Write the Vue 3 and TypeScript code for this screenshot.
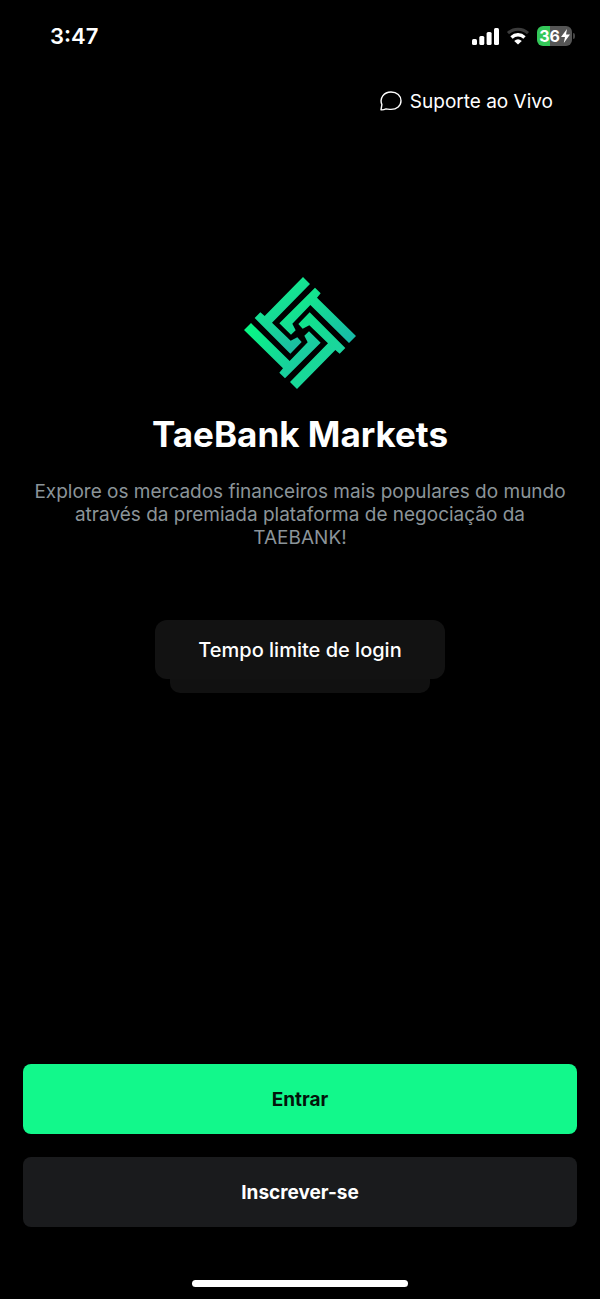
<script setup lang="ts">
interface LogoArm {
  id: string
  points: string
  from: [number, number]
  to: [number, number]
  start: string
  end: string
}

const arms: LogoArm[] = [
  {
    id: 'arm-top',
    points: '220,35 241,56 127,172 183,226 203,216 216,230 182,265 75,158 92,141 105,152',
    from: [130, 100], to: [216, 240], start: '#14e590', end: '#1bbda3',
  },
  {
    id: 'arm-right',
    points: '379,212 358,233 242,119 188,175 198,195 184,208 149,174 256,67 273,84 262,97',
    from: [250, 80], to: [372, 220], start: '#14e58e', end: '#17b9a8',
  },
  {
    id: 'arm-bottom',
    points: '202,371 181,350 295,234 239,180 219,190 206,176 240,141 347,248 330,265 317,254',
    from: [210, 150], to: [340, 250], start: '#0fe388', end: '#1cd49f',
  },
  {
    id: 'arm-left',
    points: '43,194 64,173 180,287 234,231 224,211 238,198 273,232 166,339 149,322 160,309',
    from: [50, 180], to: [210, 290], start: '#07f983', end: '#1acb9f',
  },
]

const title = 'TaeBank Markets'
const description =
  'Explore os mercados financeiros mais populares do mundo através da premiada plataforma de negociação da TAEBANK!'
</script>

<template>
  <div class="screen">
    <header class="status">
      <span class="time">3:47</span>
      <div class="indicators">
        <svg class="signal" viewBox="0 0 27 17" aria-label="Sinal">
          <rect x="0" y="11" width="5" height="6" rx="1.5" />
          <rect x="7.3" y="8" width="5" height="9" rx="1.5" />
          <rect x="14.6" y="4" width="5" height="13" rx="1.5" />
          <rect x="22" y="0" width="5" height="17" rx="1.5" />
        </svg>
        <svg class="wifi" viewBox="0 0 24 18" fill="none" aria-label="Wi-Fi">
          <path d="M2 6.2C7.500 .9 16.500 .9 22 6.200" stroke="#3b3b3b" stroke-width="3" />
          <path d="M5.500 10.400C9.300 6.800 14.700 6.800 18.500 10.400" stroke="#fff" stroke-width="3.400" />
          <path d="M12 17.600L8.200 13.900Q12 10.800 15.800 13.900Z" fill="#fff" />
        </svg>
        <div class="battery">
          <div class="cell">
            <span>36</span>
            <svg class="bolt" viewBox="0 0 9 14" aria-hidden="true">
              <path d="M6 0L0 8H4L2.800 14L9 5.600H5Z" />
            </svg>
          </div>
          <i class="cap"></i>
        </div>
      </div>
    </header>

    <div class="toolbar">
      <button class="support" type="button">
        <svg viewBox="0 0 22 20" aria-hidden="true">
          <path d="M1 18.800L1.900 13.500C-.9 7 4 1 11 1C17 1 21 4.800 21 9.800C21 14.800 16.800 18.400 11 18.400C9 18.400 7.400 18 6 17.900C4.400 18.600 2.600 19 1 18.800Z" />
        </svg>
        Suporte ao Vivo
      </button>
    </div>

    <main class="intro">
      <svg class="logo" viewBox="43 35 336 336" role="img" aria-label="TaeBank">
        <defs>
          <linearGradient
            v-for="arm in arms" :id="arm.id" :key="arm.id" gradientUnits="userSpaceOnUse"
            :x1="arm.from[0]" :y1="arm.from[1]" :x2="arm.to[0]" :y2="arm.to[1]"
          >
            <stop offset="0" :stop-color="arm.start" />
            <stop offset="1" :stop-color="arm.end" />
          </linearGradient>
        </defs>
        <polygon v-for="arm in arms" :key="arm.id" :points="arm.points" :fill="`url(#${arm.id})`" />
      </svg>
      <h1>{{ title }}</h1>
      <p class="description">{{ description }}</p>
      <div class="notice" role="status">
        <div class="message">Tempo limite de login</div>
        <div class="stacked"></div>
      </div>
    </main>

    <footer class="actions">
      <button class="primary" type="button">Entrar</button>
      <button class="secondary" type="button">Inscrever-se</button>
      <div class="home"></div>
    </footer>
  </div>
</template>

<style>
body {
  margin: 0;
  background: #000;
}
</style>

<style scoped>
.screen {
  box-sizing: border-box;
  min-height: 100vh;
  display: flex;
  flex-direction: column;
  background: #000;
  color: #fff;
  font-family: Inter, "Liberation Sans", sans-serif;
}
button {
  font: inherit;
  border: 0;
  cursor: pointer;
}
.status {
  display: flex;
  justify-content: space-between;
  align-items: center;
  height: 72px;
  padding: 0 25px 0 50px;
}
.time {
  font-size: 22px;
  font-weight: 600;
}
.indicators {
  display: flex;
  align-items: center;
  gap: 7px;
}
.signal {
  width: 27px;
  height: 17px;
  fill: #fff;
}
.wifi {
  width: 24px;
  height: 18px;
}
.battery {
  display: flex;
  align-items: center;
  gap: 1px;
}
.cell {
  display: flex;
  align-items: center;
  justify-content: center;
  gap: 1px;
  width: 35px;
  height: 20px;
  border-radius: 6px;
  background: linear-gradient(90deg, #34c759 36%, #555 36%);
  font-size: 16px;
  font-weight: 700;
}
.bolt {
  width: 9px;
  height: 14px;
  fill: #fff;
}
.cap {
  width: 2px;
  height: 6px;
  border-radius: 0 2px 2px 0;
  background: #444;
}
.toolbar {
  display: flex;
  justify-content: flex-end;
  padding: 14px 47px 0;
}
.support {
  display: flex;
  align-items: center;
  gap: 8px;
  padding: 0;
  height: 30px;
  background: none;
  color: #fff;
  font-size: 19px;
  font-weight: 400;
}
.support svg {
  width: 22px;
  height: 20px;
  fill: none;
  stroke: #fff;
  stroke-width: 1.4;
  stroke-linejoin: round;
}
.intro {
  flex: 1;
  display: flex;
  flex-direction: column;
  align-items: center;
  padding: 161px 30px 40px;
  text-align: center;
}
.logo {
  width: 112px;
  height: 112px;
}
h1 {
  margin: 23px 0 0;
  font-size: 35px;
  line-height: 44px;
  font-weight: 700;
}
.description {
  margin: 24px 0 0;
  color: #8b9499;
  font-size: 19px;
  line-height: 23px;
}
.notice {
  margin-top: 71px;
}
.message {
  padding: 2px 43px 0;
  border-radius: 12px;
  background: #121212;
  font-size: 20px;
  font-weight: 500;
  line-height: 57px;
}
.stacked {
  height: 14px;
  margin: 0 15px;
  border-radius: 0 0 10px 10px;
  background: #111;
}
.actions {
  display: flex;
  flex-direction: column;
  padding: 0 23px 12px;
}
.primary,
.secondary {
  height: 70px;
  border-radius: 8px;
  font-size: 19px;
  font-weight: 700;
}
.primary {
  background: #12f88b;
  color: #03140b;
}
.secondary {
  margin-top: 23px;
  background: #1a1b1d;
  color: #fff;
}
.home {
  align-self: center;
  width: 39%;
  height: 7px;
  margin-top: 53px;
  border-radius: 4px;
  background: #fff;
}
</style>
